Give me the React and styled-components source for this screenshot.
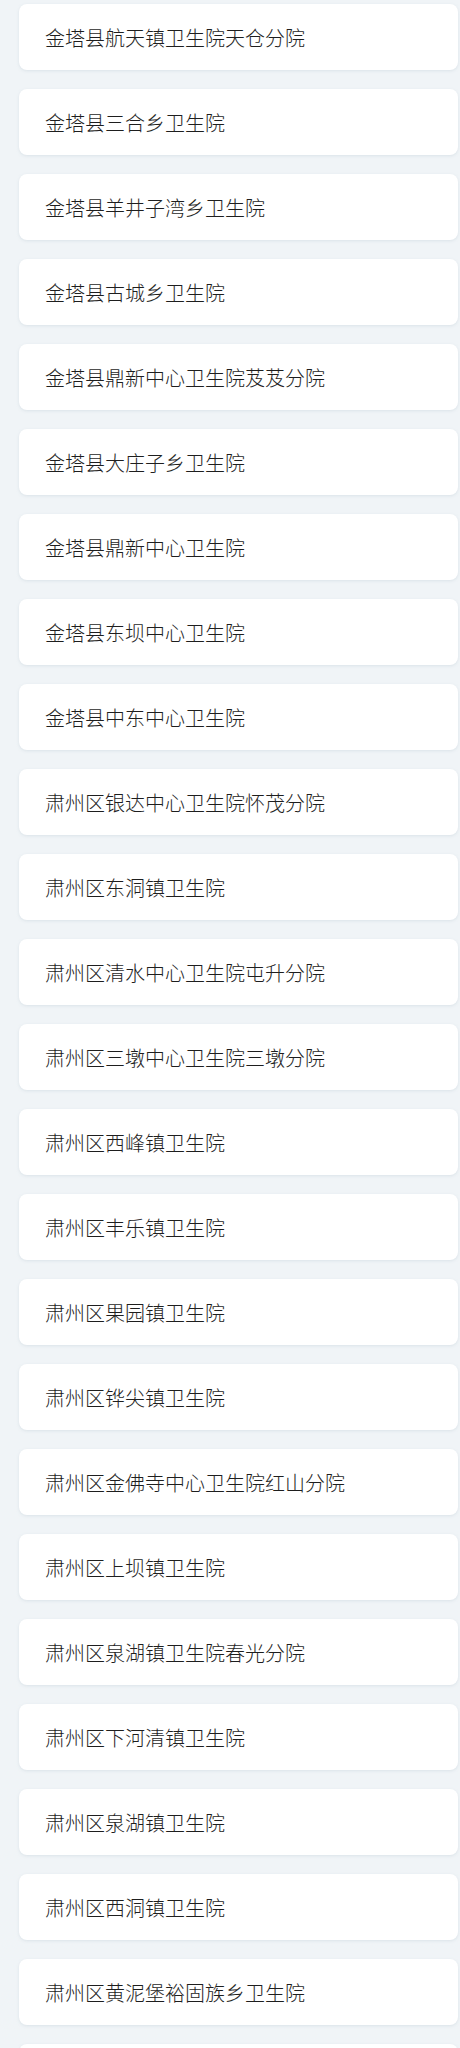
import React from 'react';
import styled, { createGlobalStyle } from 'styled-components';

const GlobalStyle = createGlobalStyle`
  html, body {
    margin: 0;
    padding: 0;
    background: #f0f4f7;
  }
  body {
    font-family: "Noto Sans CJK SC", "Noto Sans", sans-serif;
  }
`;

const List = styled.div`
  display: flex;
  flex-direction: column;
  gap: 19px;
  padding: 4px 2px 20px 19px;
`;

const Card = styled.div`
  height: 66px;
  display: flex;
  align-items: center;
  padding-left: 26px;
  background: #ffffff;
  border-radius: 8px;
  box-shadow: 0 1px 3px rgba(180, 195, 205, 0.35);
  font-size: 20px;
  font-weight: 300;
  color: #1e1e1e;
  box-sizing: border-box;
`;

const hospitals = [
  '金塔县航天镇卫生院天仓分院',
  '金塔县三合乡卫生院',
  '金塔县羊井子湾乡卫生院',
  '金塔县古城乡卫生院',
  '金塔县鼎新中心卫生院芨芨分院',
  '金塔县大庄子乡卫生院',
  '金塔县鼎新中心卫生院',
  '金塔县东坝中心卫生院',
  '金塔县中东中心卫生院',
  '肃州区银达中心卫生院怀茂分院',
  '肃州区东洞镇卫生院',
  '肃州区清水中心卫生院屯升分院',
  '肃州区三墩中心卫生院三墩分院',
  '肃州区西峰镇卫生院',
  '肃州区丰乐镇卫生院',
  '肃州区果园镇卫生院',
  '肃州区铧尖镇卫生院',
  '肃州区金佛寺中心卫生院红山分院',
  '肃州区上坝镇卫生院',
  '肃州区泉湖镇卫生院春光分院',
  '肃州区下河清镇卫生院',
  '肃州区泉湖镇卫生院',
  '肃州区西洞镇卫生院',
  '肃州区黄泥堡裕固族乡卫生院',
  '',
];

export default function App() {
  return (
    <>
      <GlobalStyle />
      <List>
        {hospitals.map((name, i) => (
          <Card key={i}>{name}</Card>
        ))}
      </List>
    </>
  );
}
